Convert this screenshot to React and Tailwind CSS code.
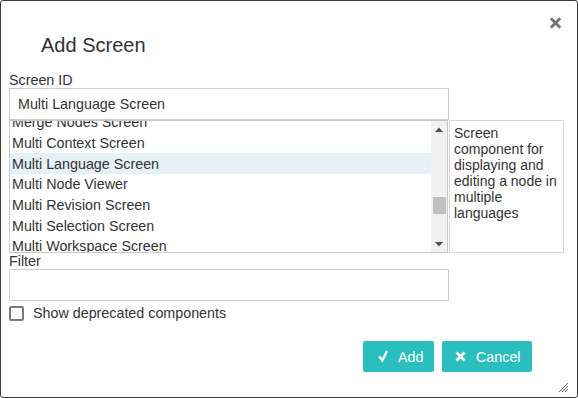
const ROWS = [
  'Merge Nodes Screen',
  'Multi Context Screen',
  'Multi Language Screen',
  'Multi Node Viewer',
  'Multi Revision Screen',
  'Multi Selection Screen',
  'Multi Workspace Screen',
]

function CloseIcon() {
  return (
    <svg width="13" height="12" viewBox="0 0 13 12">
      <path d="M1.8 1.3 L11.2 10.7 M11.2 1.3 L1.8 10.7" stroke="#777" strokeWidth="3" />
    </svg>
  )
}

function CheckIcon() {
  return (
    <svg width="10" height="13" viewBox="0 0 10 13">
      <path d="M0.3 7.2 L2.4 5.6 L4.1 8.4 L7.9 0.6 L9.9 1.5 L4.7 12.4 Z" fill="white" />
    </svg>
  )
}

function XIcon() {
  return (
    <svg width="11" height="11" viewBox="0 0 11 11">
      <path d="M1.5 1.5 L9.5 9.5 M9.5 1.5 L1.5 9.5" stroke="white" strokeWidth="2.8" />
    </svg>
  )
}

function Scrollbar() {
  return (
    <div className="w-[16px] flex flex-col bg-[#f1f1f1]">
      <div className="h-[16px] flex items-center justify-center">
        <svg width="8" height="5" viewBox="0 0 8 5">
          <path d="M0 5 L4 0.5 L8 5 Z" fill="#505050" />
        </svg>
      </div>
      <div className="flex-1">
        <div className="mt-[60px] ml-[2px] w-[13px] h-[17px] bg-[#c1c1c1]" />
      </div>
      <div className="h-[16px] flex items-center justify-center">
        <svg width="8" height="5" viewBox="0 0 8 5">
          <path d="M0 0 L4 4.5 L8 0 Z" fill="#505050" />
        </svg>
      </div>
    </div>
  )
}

export default function App() {
  return (
    <div className="relative w-[578px] h-[398px] bg-white border border-[#3a3a3a] rounded-[3px] font-['Liberation_Sans',Arial,sans-serif] text-[#333] text-[14.3px] leading-[16px]">

      {/* Close */}
      <button className="absolute top-[16px] right-[15px]">
        <CloseIcon />
      </button>

      {/* Header */}
      <h2 className="pt-[33px] pl-[40px] text-[20px] leading-[22px]">Add Screen</h2>

      {/* Body */}
      <div className="px-[8px] mt-[16px]">
        <label className="block h-[16px]">Screen ID</label>
        <div className="w-[440px] h-[32px] border border-[#ccc] flex items-center pl-[8px]">
          Multi Language Screen
        </div>

        <div className="flex">
          <div className="w-[439px] h-[133px] border border-[#c8c8c8] flex">
            <div className="flex-1 overflow-hidden">
              <div className="-mt-[9px]">
                {ROWS.map((r) => (
                  <div
                    key={r}
                    className={`h-[20.67px] flex items-center pl-[2px] ${r === 'Multi Language Screen' ? 'bg-[#e6f0f7]' : ''}`}
                  >
                    {r}
                  </div>
                ))}
              </div>
            </div>
            <Scrollbar />
          </div>
          <div className="ml-[1px] w-[115px] h-[133px] border border-[#d9d9d9] p-[4px] text-[14px]">
            Screen component for displaying and editing a node in multiple languages
          </div>
        </div>

        <label className="block h-[16px]">Filter</label>
        <div className="w-[440px] h-[32px] border border-[#ccc]" />

        <label className="mt-[4px] h-[16px] flex items-center">
          <span className="w-[15px] h-[15px] border-2 border-[#7a7a7a] rounded-[2px]" />
          <span className="ml-[9px]">Show deprecated components</span>
        </label>
      </div>

      {/* Footer */}
      <div className="mt-[20px] pr-[45px] flex justify-end gap-[8px]">
        <button className="w-[71px] h-[31px] rounded-[2px] bg-[#2bbebe] text-white flex items-center pl-[15px] gap-[10px]">
          <CheckIcon />
          <span>Add</span>
        </button>
        <button className="w-[90px] h-[31px] rounded-[2px] bg-[#2bbebe] text-white flex items-center pl-[13px] gap-[10px]">
          <XIcon />
          <span>Cancel</span>
        </button>
      </div>

      {/* Resize grip */}
      <svg className="absolute right-[8px] bottom-[4px]" width="12" height="12" viewBox="0 0 12 12">
        <path d="M2 11 L11 2 M5 11 L11 5 M8 11 L11 8" stroke="#666" strokeWidth="1" />
      </svg>
    </div>
  )
}
